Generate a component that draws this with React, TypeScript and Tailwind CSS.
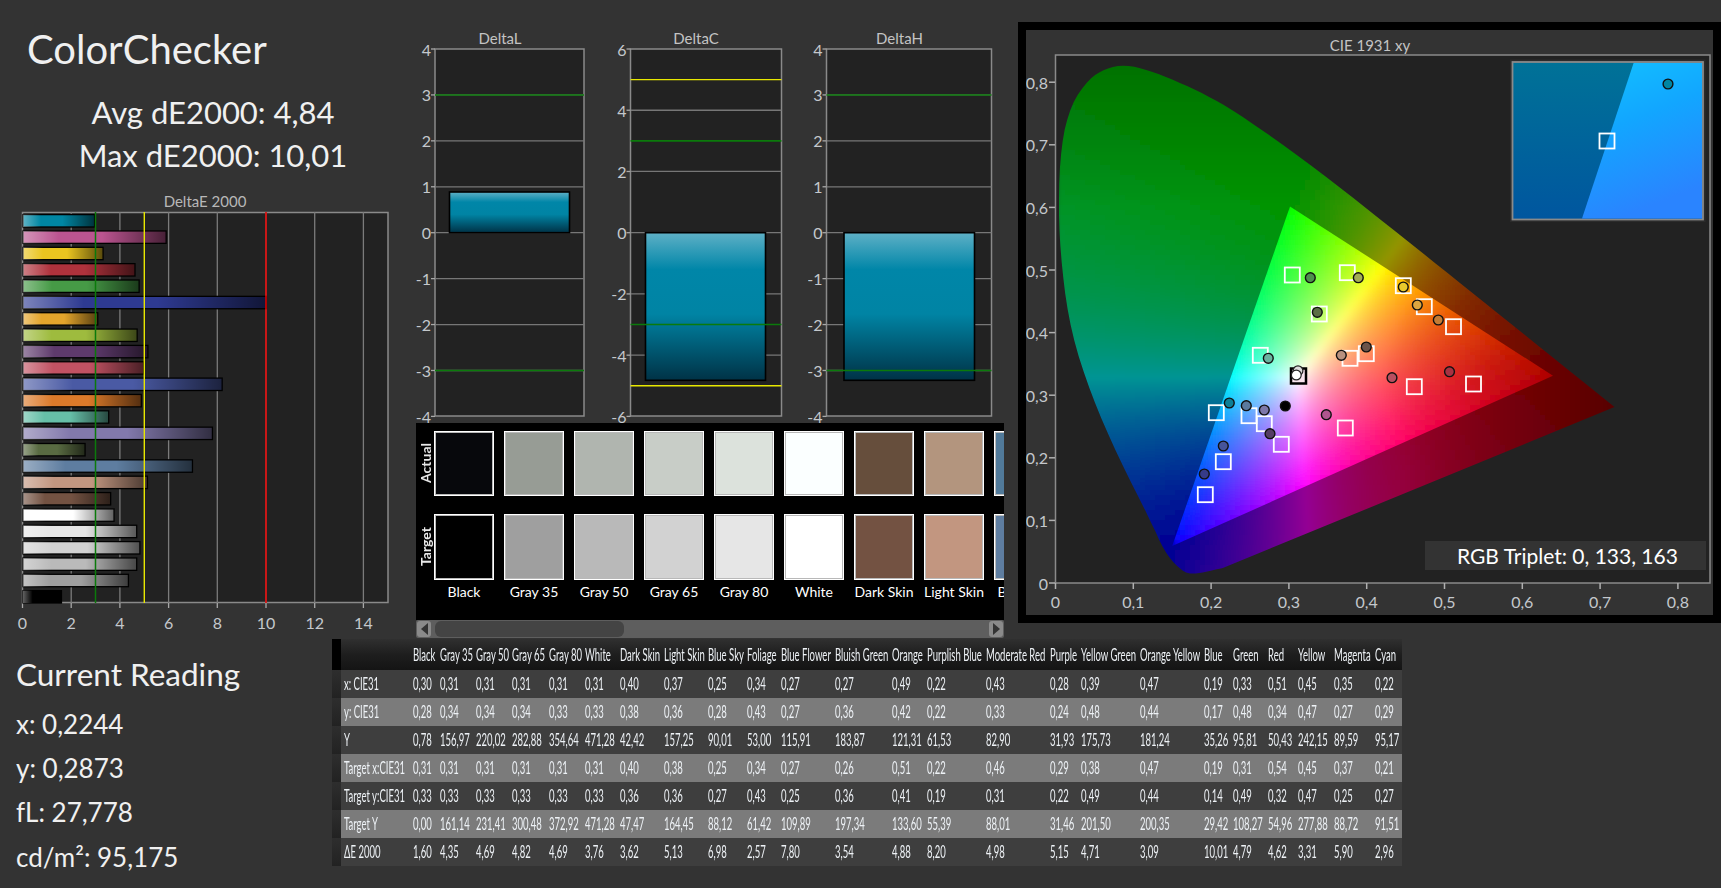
import { useMemo } from 'react';

const BARS: [number, string][] = [
  [2.96, '#0086a3'], [5.9, '#bb5490'], [3.31, '#eac520'], [4.62, '#af323c'], [4.79, '#469a46'], [10.01, '#2e3a92'],
  [3.09, '#e4a52c'], [4.71, '#9ebb3e'], [5.15, '#5e3a6c'], [4.98, '#c15263'], [8.2, '#4a5aa4'], [4.88, '#dc7a2a'],
  [3.54, '#66bfa8'], [7.8, '#8279ac'], [2.57, '#596b42'], [6.98, '#5e7da0'], [5.13, '#c29680'], [3.62, '#735242'],
  [3.76, '#ffffff'], [4.69, '#e6e6e6'], [4.82, '#d2d2d2'], [4.69, '#bababa'], [4.35, '#9f9f9f'], [1.6, '#000000'],
];

const SWATCHES = [
  ['Black', '#07080c', '#000000'], ['Gray 35', '#979c95', '#9f9f9f'], ['Gray 50', '#b0b5af', '#b9b9b9'],
  ['Gray 65', '#c8cdc7', '#d2d2d2'], ['Gray 80', '#dce2dc', '#e6e6e6'], ['White', '#fbffff', '#ffffff'],
  ['Dark Skin', '#664e3c', '#735242'], ['Light Skin', '#b3957e', '#c29680'], ['Blue Sky', '#517a9a', '#5e7da0'],
];

const TABLE = [
  ['', 'Black', 'Gray 35', 'Gray 50', 'Gray 65', 'Gray 80', 'White', 'Dark Skin', 'Light Skin', 'Blue Sky', 'Foliage', 'Blue Flower', 'Bluish Green', 'Orange', 'Purplish Blue', 'Moderate Red', 'Purple', 'Yellow Green', 'Orange Yellow', 'Blue', 'Green', 'Red', 'Yellow', 'Magenta', 'Cyan'],
  ['x: CIE31', '0,30', '0,31', '0,31', '0,31', '0,31', '0,31', '0,40', '0,37', '0,25', '0,34', '0,27', '0,27', '0,49', '0,22', '0,43', '0,28', '0,39', '0,47', '0,19', '0,33', '0,51', '0,45', '0,35', '0,22'],
  ['y: CIE31', '0,28', '0,34', '0,34', '0,34', '0,33', '0,33', '0,38', '0,36', '0,28', '0,43', '0,27', '0,36', '0,42', '0,22', '0,33', '0,24', '0,48', '0,44', '0,17', '0,48', '0,34', '0,47', '0,27', '0,29'],
  ['Y', '0,78', '156,97', '220,02', '282,88', '354,64', '471,28', '42,42', '157,25', '90,01', '53,00', '115,91', '183,87', '121,31', '61,53', '82,90', '31,93', '175,73', '181,24', '35,26', '95,81', '50,43', '242,15', '89,59', '95,17'],
  ['Target x:CIE31', '0,31', '0,31', '0,31', '0,31', '0,31', '0,31', '0,40', '0,38', '0,25', '0,34', '0,27', '0,26', '0,51', '0,22', '0,46', '0,29', '0,38', '0,47', '0,19', '0,31', '0,54', '0,45', '0,37', '0,21'],
  ['Target y:CIE31', '0,33', '0,33', '0,33', '0,33', '0,33', '0,33', '0,36', '0,36', '0,27', '0,43', '0,25', '0,36', '0,41', '0,19', '0,31', '0,22', '0,49', '0,44', '0,14', '0,49', '0,32', '0,47', '0,25', '0,27'],
  ['Target Y', '0,00', '161,14', '231,41', '300,48', '372,92', '471,28', '47,47', '164,45', '88,12', '61,42', '109,89', '197,34', '133,60', '55,39', '88,01', '31,46', '201,50', '200,35', '29,42', '108,27', '54,96', '277,88', '88,72', '91,51'],
  ['ΔE 2000', '1,60', '4,35', '4,69', '4,82', '4,69', '3,76', '3,62', '5,13', '6,98', '2,57', '7,80', '3,54', '4,88', '8,20', '4,98', '5,15', '4,71', '3,09', '10,01', '4,79', '4,62', '3,31', '5,90', '2,96'],
];

const ROW_GRID = 'grid grid-cols-[81px_27px_36px_36px_37px_36px_35px_44px_44px_39px_34px_54px_57px_35px_59px_64px_31px_59px_64px_29px_35px_30px_36px_41px_27px] items-center';

// chromaticity points in screen pixels
const SQUARES: [number, number][] = [
  [1292.3, 275], [1347.3, 272.7], [1319.3, 314], [1403.3, 285.7], [1424.3, 306.7], [1453.5, 326.7], [1260.3, 355.3],
  [1366.3, 353.7], [1350, 358.3], [1414.3, 386.7], [1473.5, 384], [1216.3, 412.7], [1249, 415.7], [1264.3, 423.7],
  [1345.3, 428], [1281.3, 444.3], [1223.3, 461.7], [1205.3, 494.7],
];
const DOTS: [number, number, string][] = [
  [1310.3, 277.7, '#4d8f4d'], [1358.3, 277.7, '#a3ad55'], [1317.3, 312.3, '#5b6e44'], [1403.3, 287, '#e8c92c'],
  [1417.3, 305, '#dca63f'], [1438.3, 320, '#c47c35'], [1268.3, 358.3, '#6ab39f'], [1366.3, 347, '#6b5349'],
  [1341.3, 355.3, '#b8917f'], [1392, 377.7, '#b84f60'], [1449.5, 371.7, '#a83242'], [1229.3, 403, '#0d7f96'],
  [1246.3, 405.7, '#5b7a9e'], [1264.3, 410, '#7d78aa'], [1285.3, 406, '#000000'], [1326.3, 414.7, '#b0558f'],
  [1270, 433.7, '#553d66'], [1223.3, 446, '#46549a'], [1204.3, 474, '#363b88'],
];

function chaikin(pts: [number, number][]) {
  const out: [number, number][] = [pts[0]];
  for (let i = 0; i < pts.length - 1; i++) {
    const [ax, ay] = pts[i];
    const [bx, by] = pts[i + 1];
    out.push([ax * 0.75 + bx * 0.25, ay * 0.75 + by * 0.25], [ax * 0.25 + bx * 0.75, ay * 0.25 + by * 0.75]);
  }
  out.push(pts[pts.length - 1]);
  return out;
}

const CURVE: [number, number][] = [
  [0.215, 0.024], [0.1735, 0.0125], [0.158, 0.024], [0.14, 0.05], [0.122, 0.1], [0.081, 0.2], [0.046, 0.3], [0.02, 0.4], [0.008, 0.5],
  [0.0035, 0.6], [0.007, 0.7], [0.02, 0.765], [0.043, 0.805], [0.064, 0.822], [0.09, 0.828], [0.12, 0.819], [0.155, 0.802], [0.1929, 0.78],
  [0.2296, 0.7543], [0.3016, 0.6923], [0.3731, 0.6245], [0.4441, 0.5547], [0.5125, 0.4866], [0.5752, 0.4242], [0.6482, 0.3514], [0.7185, 0.281],
];
const LOCUS = chaikin(chaikin(CURVE));
const TRIANGLE: [number, number][] = [[0.6395, 0.331], [0.3014, 0.6016], [0.15, 0.059]];

const px = (x: number) => 1055.5 + x * 778;
const py = (y: number) => 583 - y * 626;
const toPoints = (pts: [number, number][]) => pts.map(([x, y]) => `${px(x).toFixed(1)},${py(y).toFixed(1)}`).join(' ');

function inside(pts: [number, number][], x: number, y: number) {
  let hit = false;
  for (let i = 0, j = pts.length - 1; i < pts.length; j = i++) {
    const [xi, yi] = pts[i];
    const [xj, yj] = pts[j];
    if (yi > y !== yj > y && x < ((xj - xi) * (y - yi)) / (yj - yi) + xi) hit = !hit;
  }
  return hit;
}

function xyColor(x: number, y: number, dim: number, gamma: number) {
  const yy = Math.max(y, 0.01);
  const X = x / yy;
  const Z = (1 - x - yy) / yy;
  const lin = [3.2406 * X - 1.5372 - 0.4986 * Z, -0.9689 * X + 1.8758 + 0.0415 * Z, 0.0557 * X - 0.204 + 1.057 * Z].map((v) => Math.max(v, 0));
  const max = Math.max(...lin, 0.0001);
  const rgb = lin.map((v) => Math.round(255 * dim * Math.pow(v / max, gamma)));
  return `rgb(${rgb[0]},${rgb[1]},${rgb[2]})`;
}

function outerDim(x: number, y: number) {
  let d = 0.58;
  if (y > 0.6) d -= ((y - 0.6) / 0.22) * 0.13;
  if (x > 0.45) d -= (Math.min(x - 0.45, 0.27) / 0.27) * 0.24;
  return d;
}

function innerDim(x: number, y: number) {
  const d = Math.hypot(x - 0.6395, y - 0.331);
  return d < 0.22 ? 0.68 + (0.32 * d) / 0.22 : 1;
}

function Gamut() {
  const cells = useMemo(() => {
    const size = 5;
    const inner: { x: number; y: number; c: string }[] = [];
    const outer: { x: number; y: number; c: string }[] = [];
    for (let sx = 1055; sx < 1625; sx += size) {
      for (let sy = 60; sy < 580; sy += size) {
        const x = (sx + size / 2 - 1055.5) / 778;
        const y = (583 - sy - size / 2) / 626;
        const pad = 12 / 778;
        let nearTri = false;
        let nearLocus = false;
        for (const [dx, dy] of [[0, 0], [pad, 0], [-pad, 0], [0, pad], [0, -pad]]) {
          if (inside(TRIANGLE, x + dx, y + dy)) nearTri = true;
          if (inside(LOCUS, x + dx, y + dy)) nearLocus = true;
        }
        if (nearTri) inner.push({ x: sx, y: sy, c: xyColor(x, y, innerDim(x, y), 0.85) });
        if (nearLocus) outer.push({ x: sx, y: sy, c: xyColor(x, y, outerDim(x, y), 1) });
      }
    }
    return { inner, outer };
  }, []);
  return (
    <>
      <defs>
        <clipPath id="locus"><polygon points={toPoints(LOCUS)} /></clipPath>
        <clipPath id="tri"><polygon points={toPoints(TRIANGLE)} /></clipPath>
        <filter id="soft" filterUnits="userSpaceOnUse" x="1030" y="40" width="680" height="560"><feGaussianBlur stdDeviation="3" /></filter>
      </defs>
      <g clipPath="url(#locus)">
        <g filter="url(#soft)">
          {cells.outer.map((c) => <rect key={`${c.x}-${c.y}`} x={c.x} y={c.y} width={5.5} height={5.5} fill={c.c} />)}
        </g>
      </g>
      <g clipPath="url(#tri)">
        <g filter="url(#soft)">
          {cells.inner.map((c) => <rect key={`${c.x}-${c.y}`} x={c.x} y={c.y} width={5.5} height={5.5} fill={c.c} />)}
        </g>
      </g>
    </>
  );
}

function CieChart() {
  const xs = [0, 1, 2, 3, 4, 5, 6, 7, 8];
  return (
    <svg className="block h-[585px] w-[687px]" viewBox="1026 30 687 585">
      <defs>
        <linearGradient id="insetDark" x1="0" y1="0" x2="0" y2="1">
          <stop offset="0" stopColor="#007297" />
          <stop offset="1" stopColor="#00569f" />
        </linearGradient>
        <linearGradient id="insetLight" x1="0" y1="0" x2="0.3" y2="1">
          <stop offset="0" stopColor="#12c2ff" />
          <stop offset="0.45" stopColor="#12a6ff" />
          <stop offset="1" stopColor="#2a84ff" />
        </linearGradient>
      </defs>
      <text x={1370} y={45} textAnchor="middle" dominantBaseline="central" fontSize={15} fill="#c4c4c4">CIE 1931 xy</text>
      <rect x={1055.5} y={55} width={654.5} height={528} fill="#222222" stroke="#8a8a8a" strokeWidth={1.5} />
      {xs.map((v) => (
        <g key={v}>
          <line x1={px(v / 10)} x2={px(v / 10)} y1={583} y2={589} stroke="#b0b0b0" strokeWidth={1.5} />
          <text x={px(v / 10)} y={601} textAnchor="middle" dominantBaseline="central" fontSize={16} fill="#c4c8cc">{v === 0 ? '0' : `0,${v}`}</text>
          <line x1={1049} x2={1055} y1={py(v / 10)} y2={py(v / 10)} stroke="#b0b0b0" strokeWidth={1.5} />
          <text x={1048} y={py(v / 10)} textAnchor="end" dominantBaseline="central" fontSize={16} fill="#c4c8cc">{v === 0 ? '0' : `0,${v}`}</text>
        </g>
      ))}
      <Gamut />
      {SQUARES.map(([x, y]) => <rect key={`${x}-${y}`} x={x - 7.5} y={y - 7.5} width={15} height={15} fill="none" stroke="#ffffff" strokeWidth={1.8} />)}
      <rect x={1291} y={368.5} width={15} height={15} fill="#f8e4ee" stroke="#000000" strokeWidth={2.5} />
      {DOTS.map(([x, y, c]) => <circle key={`${x}-${y}`} cx={x} cy={y} r={4.9} fill={c} stroke="#111111" strokeWidth={1.4} />)}
      <circle cx={1298} cy={370.7} r={4.9} fill="#dddddd" stroke="#222222" strokeWidth={1.2} />
      <circle cx={1296.3} cy={375} r={4.9} fill="#ffffff" stroke="#222222" strokeWidth={1.2} />
      <rect x={1510} y={59.5} width={195.5} height={162.5} fill="#2b2b2b" />
      <rect x={1512.5} y={62} width={190.5} height={157.5} fill="url(#insetDark)" stroke="#8a8a8a" strokeWidth={1.8} />
      <polygon points="1633.6,63 1702,63 1702,218.5 1582,218.5" fill="url(#insetLight)" />
      <rect x={1599.5} y={133.5} width={15} height={15} fill="none" stroke="#ffffff" strokeWidth={1.8} />
      <circle cx={1668} cy={84} r={4.9} fill="#0086a3" stroke="#111111" strokeWidth={1.4} />
    </svg>
  );
}

function DeltaChart({ title, titleX, left, right, max, ticks, greens, yellows, bar, barEdge, vw, vbX }: {
  title: string; titleX: number; left: number; right: number; max: number; ticks: number[]; greens: number[]; yellows: number[];
  bar: [number, number]; barEdge: number; vw: number; vbX: number;
}) {
  const y = (v: number) => 232.7 - (v * 183.7) / max;
  return (
    <svg className="block h-[398px] shrink-0" width={vw} viewBox={`${vbX} 25 ${vw} 398`}>
      <defs>
        <linearGradient id={`bar${title}`} x1="0" y1="0" x2="0" y2="1">
          <stop offset="0" stopColor="#5eb0c6" />
          <stop offset="0.25" stopColor="#0086a8" />
          <stop offset="0.55" stopColor="#0084a4" />
          <stop offset="1" stopColor="#003246" />
        </linearGradient>
      </defs>
      <text x={titleX} y={38} textAnchor="middle" dominantBaseline="central" fontSize={15} fill="#c4c4c4">{title}</text>
      <rect x={left} y={49} width={right - left} height={367} fill="#222222" stroke="#8a8a8a" strokeWidth={1.5} />
      {ticks.map((v) => (
        <g key={v}>
          {v !== max && v !== -max && <line x1={left} x2={right} y1={y(v)} y2={y(v)} stroke="#777777" strokeWidth={1.3} />}
          <line x1={left - 4} x2={left} y1={y(v)} y2={y(v)} stroke="#a8a8a8" strokeWidth={1.3} />
          <text x={left - 4} y={y(v)} textAnchor="end" dominantBaseline="central" fontSize={16} fill="#c4c8cc">{v}</text>
        </g>
      ))}
      <rect x={bar[0]} y={Math.min(y(0), barEdge)} width={bar[1] - bar[0]} height={Math.abs(barEdge - y(0))} fill={`url(#bar${title})`} stroke="#000000" strokeWidth={1.6} />
      {greens.map((v) => <line key={v} x1={left} x2={right} y1={y(v)} y2={y(v)} stroke="#0b7a0b" strokeWidth={1.6} />)}
      {yellows.map((v) => <line key={v} x1={left} x2={right} y1={y(v)} y2={y(v)} stroke="#e8e800" strokeWidth={1.4} />)}
    </svg>
  );
}

function DeltaEChart() {
  const x = (v: number) => 22.5 + v * 24.35;
  return (
    <svg className="block h-[448px] w-[412px]" viewBox="0 190 412 448">
      <defs>
        <linearGradient id="barShade" x1="0" y1="0" x2="1" y2="0">
          <stop offset="0" stopColor="#ffffff" stopOpacity="0.38" />
          <stop offset="0.25" stopColor="#ffffff" stopOpacity="0" />
          <stop offset="0.55" stopColor="#000000" stopOpacity="0" />
          <stop offset="1" stopColor="#000000" stopOpacity="0.62" />
        </linearGradient>
      </defs>
      <text x={205} y={201} textAnchor="middle" dominantBaseline="central" fontSize={15} fill="#b8b8b8">DeltaE 2000</text>
      <rect x={22.5} y={212.5} width={365.5} height={390} fill="#222222" stroke="#8a8a8a" strokeWidth={1.5} />
      {[0, 2, 4, 6, 8, 10, 12, 14].map((v) => (
        <g key={v}>
          {v > 0 && <line x1={x(v)} x2={x(v)} y1={212} y2={603} stroke="#7b7b7b" strokeWidth={1.3} />}
          <line x1={x(v)} x2={x(v)} y1={603} y2={608} stroke="#a8a8a8" strokeWidth={1.3} />
          <text x={x(v)} y={622} textAnchor="middle" dominantBaseline="central" fontSize={16} fill="#c4c8cc">{v}</text>
        </g>
      ))}
      {BARS.map(([v, c], i) => (
        <g key={i}>
          <rect x={23} y={214.6 + i * 16.35} width={x(v) - 23} height={12.4} fill={c} stroke="#000000" strokeWidth={1.3} />
          <rect x={23} y={214.6 + i * 16.35} width={x(v) - 23} height={12.4} fill="url(#barShade)" />
        </g>
      ))}
      <line x1={95.5} x2={95.5} y1={212} y2={603} stroke="#0b7a0b" strokeWidth={1.5} />
      <line x1={144.3} x2={144.3} y1={212} y2={603} stroke="#e8e800" strokeWidth={1.4} />
      <line x1={266} x2={266} y1={212} y2={603} stroke="#ee0000" strokeWidth={1.5} />
    </svg>
  );
}

function SwatchPanel() {
  return (
    <div className="ml-[4px] w-[588px]">
      <div className="flex h-[197px] overflow-hidden bg-black pt-[8px]">
        <div className="flex w-[18px] shrink-0 flex-col text-[14px] font-bold text-[#e8e8e8]">
          <div className="flex h-[83px] items-start justify-center pl-[2px]">
            <span className="h-[65px] rotate-180 text-center leading-[18px] [writing-mode:vertical-rl]">Actual</span>
          </div>
          <div className="flex h-[66px] items-start justify-center pl-[2px]">
            <span className="h-[66px] rotate-180 text-center leading-[18px] [writing-mode:vertical-rl]">Target</span>
          </div>
        </div>
        {SWATCHES.map(([name, actual, target]) => (
          <div key={name} className="flex w-[70px] shrink-0 flex-col items-start">
            <div className="h-[65px] w-[60px] border border-white shadow-[inset_0_0_0_1px_#b8b8b8]" style={{ backgroundColor: actual }} />
            <div className="mt-[18px] h-[66px] w-[60px] border border-white shadow-[inset_0_0_0_1px_#b8b8b8]" style={{ backgroundColor: target }} />
            <div className="mt-[4px] w-[60px] whitespace-nowrap text-center text-[14px] leading-[16px] text-white">{name}</div>
          </div>
        ))}
      </div>
      <div className="flex h-[18px] items-center justify-between rounded-[2px] bg-[#5e5e5e] px-[1px]">
        <div className="flex h-[16px] w-[14px] items-center justify-center rounded-[3px] bg-[#8a8a8a]">
          <div className="h-0 w-0 border-y-[6px] border-r-[7px] border-y-transparent border-r-[#333333]" />
        </div>
        <div className="ml-[4px] mr-auto h-[16px] w-[189px] rounded-[6px] bg-[#444444]" />
        <div className="flex h-[16px] w-[14px] items-center justify-center rounded-[3px] bg-[#8a8a8a]">
          <div className="h-0 w-0 border-y-[6px] border-l-[7px] border-y-transparent border-l-[#333333]" />
        </div>
      </div>
    </div>
  );
}

function Cell({ text }: { text: string }) {
  return <span className="inline-block origin-left scale-x-[0.56] whitespace-nowrap text-[17px] leading-[20px] text-[#eef2f6]">{text}</span>;
}

function DataTable() {
  return (
    <div className="mt-[1px] w-[1070px]">
      {TABLE.map((row, i) => {
        const bg = i === 0 ? 'h-[31px] bg-gradient-to-b from-[#303030] via-[#1e1e1e] to-[#141414]' : i % 2 === 1 ? 'h-[28px] bg-[#3e3e3e]' : 'h-[28px] bg-[#7b7b7b]';
        return (
          <div key={i} className={`${ROW_GRID} ${bg}`}>
            <div className="flex h-full items-center">
              <div className={i === 0 ? 'h-full w-[9px] shrink-0 bg-black' : 'h-full w-[9px] shrink-0 bg-gradient-to-b from-[#2e2e2e] to-[#222222]'} />
              <div className="w-[72px] pl-[3px]"><Cell text={row[0]} /></div>
            </div>
            {row.slice(1).map((v, j) => <Cell key={j} text={v} />)}
          </div>
        );
      })}
    </div>
  );
}

export default function App() {
  return (
    <div className="h-[888px] w-[1721px] overflow-hidden bg-[#333333] text-[#f0f0f0] [font-family:Lato,sans-serif]">
      <div className="flex h-[638px]">
        <div className="w-[412px] shrink-0">
          <div className="h-[190px]">
            <h1 className="pl-[27px] pt-[20px] text-[40px] font-normal leading-[58px]">ColorChecker</h1>
            <div className="ml-[14px] mt-[13px] w-[398px] text-center text-[31px] leading-[43px]">
              <div>Avg dE2000: 4,84</div>
              <div>Max dE2000: 10,01</div>
            </div>
          </div>
          <DeltaEChart />
        </div>
        <div className="w-[606px] shrink-0">
          <div className="mt-[25px] flex">
            <DeltaChart title="DeltaL" titleX={500} left={435} right={584} max={4} ticks={[4, 3, 2, 1, 0, -1, -2, -3, -4]} greens={[3, -3]} yellows={[]} bar={[449.5, 569.5]} barEdge={192} vw={193} vbX={412} />
            <DeltaChart title="DeltaC" titleX={696} left={630.5} right={781.5} max={6} ticks={[6, 4, 2, 0, -2, -4, -6]} greens={[3, -3]} yellows={[5, -5]} bar={[645.5, 765.5]} barEdge={380.3} vw={203} vbX={605} />
            <DeltaChart title="DeltaH" titleX={899.5} left={826.5} right={991.5} max={4} ticks={[4, 3, 2, 1, 0, -1, -2, -3, -4]} greens={[3, -3]} yellows={[]} bar={[844, 974.5]} barEdge={380.3} vw={210} vbX={808} />
          </div>
          <SwatchPanel />
        </div>
        <div className="relative mt-[22px] h-[601px] w-[703px] shrink-0 border-8 border-black">
          <CieChart />
          <div className="absolute left-[399px] top-[511px] flex h-[29px] w-[281px] items-center bg-[#333333] pl-[32px] text-[21px] text-white">RGB Triplet: 0, 133, 163</div>
        </div>
      </div>
      <div className="flex">
        <div className="w-[332px] shrink-0 pl-[16px] pt-[14px]">
          <div className="text-[31.5px] leading-[44px]">Current Reading</div>
          <div className="mt-[6px] text-[26px] leading-[44.2px]">x: 0,2244</div>
          <div className="text-[26px] leading-[44.2px]">y: 0,2873</div>
          <div className="text-[26px] leading-[44.2px]">fL: 27,778</div>
          <div className="text-[26px] leading-[44.2px]">cd/m²: 95,175</div>
        </div>
        <DataTable />
      </div>
    </div>
  );
}
